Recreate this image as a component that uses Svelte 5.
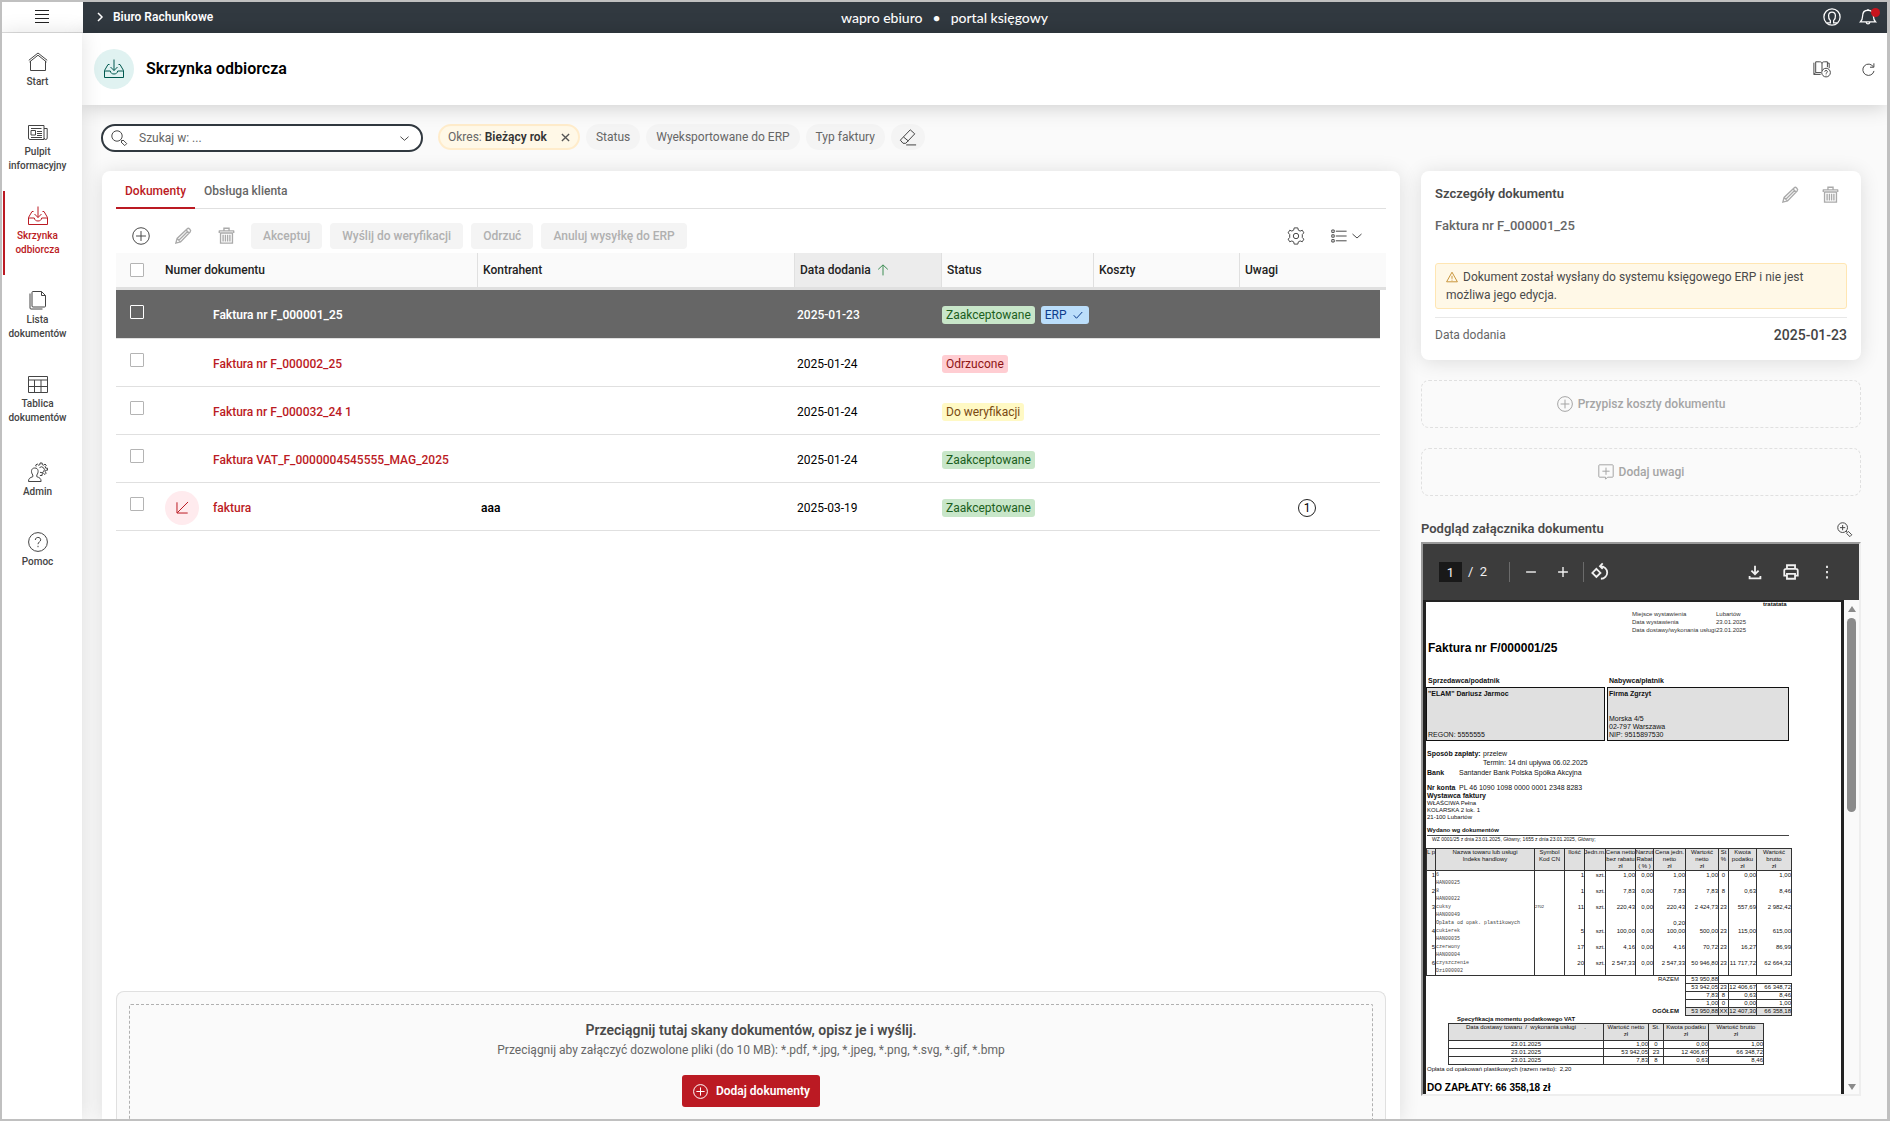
<script>
  const nav = [
    { icon: 'home', lines: ['Start'] },
    { icon: 'news', lines: ['Pulpit', 'informacyjny'] },
    { icon: 'inbox', lines: ['Skrzynka', 'odbiorcza'], active: true },
    { icon: 'files', lines: ['Lista', 'dokumentów'] },
    { icon: 'grid', lines: ['Tablica', 'dokumentów'] },
    { icon: 'admin', lines: ['Admin'], group: true },
    { icon: 'help', lines: ['Pomoc'] }
  ];

  const filters = ['Status', 'Wyeksportowane do ERP', 'Typ faktury'];
  const actions = ['Akceptuj', 'Wyślij do weryfikacji', 'Odrzuć', 'Anuluj wysyłkę do ERP'];

  const documents = [
    { name: 'Faktura nr F_000001_25', who: '', date: '2025-01-23', status: 'Zaakceptowane', tone: 'green', erp: true, selected: true },
    { name: 'Faktura nr F_000002_25', who: '', date: '2025-01-24', status: 'Odrzucone', tone: 'red' },
    { name: 'Faktura nr F_000032_24 1', who: '', date: '2025-01-24', status: 'Do weryfikacji', tone: 'yellow' },
    { name: 'Faktura VAT_F_0000004545555_MAG_2025', who: '', date: '2025-01-24', status: 'Zaakceptowane', tone: 'green' },
    { name: 'faktura', who: 'aaa', date: '2025-03-19', status: 'Zaakceptowane', tone: 'green', incoming: true, notes: 1 }
  ];

  const itemHead = [
    ['L p'], ['Nazwa towaru lub usługi', 'Indeks handlowy'], ['Symbol', 'Kod CN'], ['Ilość'], ['Jedn.m.'],
    ['Cena netto', 'bez rabatu', 'zł'], ['Narzut', 'Rabat', '( % )'], ['Cena jedn.', 'netto', 'zł'],
    ['Wartość', 'netto', 'zł'], ['St', '%'], ['Kwota', 'podatku', 'zł'], ['Wartość', 'brutto', 'zł']
  ];
  const items = [
    ['1', ['6', 'HAN00025'], '', '1', 'szt.', '1,00', '0,00', ['1,00'], '1,00', '0', '0,00', '1,00'],
    ['2', ['8', 'HAN00022'], '', '1', 'szt.', '7,83', '0,00', ['7,83'], '7,83', '8', '0,63', '8,46'],
    ['3', ['cuksy', 'HAN00049', 'Opłata od opak. plastikowych'], '2702', '11', 'szt.', '220,43', '0,00', ['220,43', '', '0,20'], '2 424,73', '23', '557,69', '2 982,42'],
    ['4', ['cukierek', 'HAN00035'], '', '5', 'szt.', '100,00', '0,00', ['100,00'], '500,00', '23', '115,00', '615,00'],
    ['5', ['czerwony', 'HAN00004'], '', '17', 'szt.', '4,16', '0,00', ['4,16'], '70,72', '23', '16,27', '86,99'],
    ['6', ['czyszczenie', 'Dzi000002'], '', '20', 'szt.', '2 547,33', '0,00', ['2 547,33'], '50 946,80', '23', '11 717,72', '62 664,32']
  ];
  const totals = [
    ['53 942,05', '23', '12 406,67', '66 348,72'],
    ['7,83', '8', '0,63', '8,46'],
    ['1,00', '0', '0,00', '1,00']
  ];
  const vat = [
    ['23.01.2025', '1,00', '0', '0,00', '1,00'],
    ['23.01.2025', '53 942,05', '23', '12 406,67', '66 348,72'],
    ['23.01.2025', '7,83', '8', '0,63', '8,46']
  ];
</script>

{#snippet icon(name, size = 20)}
  <svg class="ico" width={size} height={size} viewBox="0 0 20 20" stroke-width={20 / size} aria-hidden="true">
    {#if name === 'menu'}
      <path d="M3 3.500h14M3 7.500h14M3 11.500h14M3 15.500h14" />
    {:else if name === 'home'}
      <path d="M.8 8.300 10 1l9.200 7.300M2.500 9v9.500h15V9M1.500 10 10 3.200l8.500 6.800" />
    {:else if name === 'news'}
      <path d="M.5 3.500h15.500v14H2a1.500 1.500 0 0 1-1.500-1.500zM16 6.500h3.200V16a1.500 1.500 0 0 1-3 0M3 6.500h10.500M3 8.500h4.500v4.500H3zM9 9.500h5M9 11.500h5M9 13.500h5M3 15.500h11" />
    {:else if name === 'inbox'}
      <path d="M10 .5v11M6.500 8l3.500 3.500L13.500 8M5.500 5.500H4L.5 11.500v7h19v-7L16 5.500h-1.500M.5 12h5.800c.3 2 1.700 3 3.700 3s3.400-1 3.700-3h5.800" />
    {:else if name === 'files'}
      <path d="M5 1.500h8.500l4 4v10.500a1 1 0 0 1-1 1H5a1 1 0 0 1-1-1V2.500a1 1 0 0 1 1-1zM13.500 1.500v4h4M2 3.500V18a1 1 0 0 0 1 1h11.500" />
    {:else if name === 'grid'}
      <path d="M.5 2.500h19v16H.5zM.5 6h19M.5 12.500h19M6.500 6v12.500M13 6v12.500" />
    {:else if name === 'admin'}
      <path d="M.5 19.500c0-3.200 1.500-3.800 4.300-4.800V13c-2-2.500-2-7 2-7s4 4.500 2 7v1.700c2.800 1 4.300 1.600 4.300 4.800zM8.200 4.500 7.700 3l1.600-1 1.200 1.200L12 2.600V1h2.200v1.600l1.500.6L17 2l1.300 1.300-1.200 1.300.7 1.600h1.700v2h-1.700l-.7 1.600 1.200 1.300-1.400 1.400-1.300-1.200-1.500.6v1.600h-2.200M11.500 5.600a2.900 2.900 0 1 1 .5 4.700" />
    {:else if name === 'help'}
      <circle cx="10" cy="10" r="9.400" />
      <path d="M7.300 8c0-3.400 5.400-3.400 5.400-.2 0 2-2.700 2.200-2.700 4.400M10 13.800v1.400" />
    {:else if name === 'search'}
      <circle cx="7.500" cy="7.500" r="6.500" />
      <path d="m12.200 12.200 1.300 1.300M12.500 15l2.500-2.500 4.700 4.500-2.500 2.500z" />
    {:else if name === 'zoomin'}
      <circle cx="7.500" cy="7.500" r="6.500" />
      <path d="m12.200 12.200 1.300 1.300M12.500 15l2.500-2.500 4.700 4.500-2.500 2.500zM7.500 4v7M4 7.500h7" />
    {:else if name === 'user'}
      <circle cx="10" cy="10" r="9" />
      <path d="M4.500 16.500h3.700V14C5.500 11.500 5 4.500 10 4.500S14.500 11.500 11.800 14v2.500h3.700" />
    {:else if name === 'bell'}
      <path d="M1.500 15.500h17C16.500 13.500 16 12 16 9c0-4-2-6.500-6-6.500S4 5 4 9c0 3-.5 4.500-2.500 6.500zM10 2.500V1M8 16c.3 2.300 3.700 2.300 4 0" />
    {:else if name === 'book'}
      <path d="M1 3v13h7.500M1 16 3 14V2h4.500C9 2 10 2.700 10 4v8M10 4c0-1.300 1-2 2.500-2H16v6M16 3.500h2V9M3 14h6" />
      <circle cx="14.500" cy="14" r="4.800" />
      <path d="M13 13c0-1.900 3-1.900 3 0 0 1-1.500 1.100-1.500 2.300M14.500 16.300v.7" />
    {:else if name === 'refresh'}
      <path d="M18.500 12.200A8.700 8.700 0 1 1 17.500 6M18.300 .5V6.500h-6" />
    {:else if name === 'eraser'}
      <path d="M4.500 17 1.500 13.500 12.500 2l5 4.500-10 10.500zM5 10 10.500 14.500M8 18.800h11" />
    {:else if name === 'plus'}
      <circle cx="10" cy="10" r="9.200" />
      <path d="M10 4.500v11M4.500 10h11" />
    {:else if name === 'pencil'}
      <path d="m1 19 1.500-5.500L14.500 2c1.600-1.500 5 1.800 3.500 3.500L6.500 17.500zM13 3.500 16.500 7M2.500 13.500l4 4M4.500 15.500l10-10" />
    {:else if name === 'trash'}
      <path d="M1 4.500h18M2.500 7h15M1.500 4.500V7M18.500 4.500V7M7 4V1.500h6V4M3 7v12h14V7M6 9v8M8.700 9v8M11.300 9v8M14 9v8" />
    {:else if name === 'gear'}
      <circle cx="10" cy="10" r="3" />
      <path d="m8 1-.6 2.500-2 1L3 3.600 1.300 6.500 3 8.300v3.400l-1.700 1.800L3 16.400l2.400-.9 2 1L8 19h4l.6-2.500 2-1 2.400.9 1.700-2.900-1.700-1.800V8.300l1.700-1.800L17 3.600l-2.400.9-2-1L12 1z" />
    {:else if name === 'list'}
      <path d="M1 2.500h3v3H1zM1 8.500h3v3H1zM1 14.500h3v3H1zM6 4h13.500M6 10h13.500M6 16h13.500" />
    {:else if name === 'chevron'}
      <path d="m1 6 9 8 9-8" />
    {:else if name === 'right'}
      <path d="m6 2 8 8-8 8" />
    {:else if name === 'close'}
      <path d="m2 2 16 16M18 2 2 18" />
    {:else if name === 'up'}
      <path d="M10 19V1.500M2 9 10 1.500 18 9" />
    {:else if name === 'check'}
      <path d="m1.500 10.500 5.500 6L18.500 4" />
    {:else if name === 'incoming'}
      <path d="M18.500 1.500 2 18M1.500 2v16.500H18" />
    {:else if name === 'warn'}
      <path d="m10 2 9 16H1zM10 8v5M10 14.500v1.500" />
    {:else if name === 'note'}
      <path d="M2 1h16a1 1 0 0 1 1 1v13.500a1 1 0 0 1-1 1h-6L9.500 19v-2.500H2a1 1 0 0 1-1-1V2a1 1 0 0 1 1-1zM10 4.500v9M5.500 9h9" />
    {:else if name === 'minus'}
      <path d="M3 10h14" />
    {:else if name === 'add'}
      <path d="M3 10h14M10 3v14" />
    {:else if name === 'rotate'}
      <path d="M6 6.500 10.500 11 6 15.500 1.500 11zM10 3.500c5 0 8 3.300 8 7s-3 7-7 7M13 .5l-3 3 3 3" />
    {:else if name === 'download'}
      <path d="M10 3v9.500M6 8.500l4 4 4-4M4 14.500V17h12v-2.500" />
    {:else if name === 'print'}
      <path d="M5.500 6.500V2.500h9v4M5 14H2.500V8.500a2 2 0 0 1 2-2h11a2 2 0 0 1 2 2V14H15M5.500 12h9v5.500h-9z" />
    {:else if name === 'dots'}
      <path d="M10 3v2.500M10 8.800v2.500M10 14.600v2.500" />
    {/if}
  </svg>
{/snippet}

<div class="shell">
  <header class="topbar">
    <div class="topleft">
      <button class="plain burger" aria-label="Menu">{@render icon('menu')}</button>
      <button class="plain org">{@render icon('right', 10)}<span>Biuro Rachunkowe</span></button>
    </div>
    <div class="brand">wapro ebiuro<span class="sep">•</span>portal księgowy</div>
    <div class="topright">
      <button class="plain" aria-label="Konto">{@render icon('user', 18)}</button>
      <button class="plain bell" aria-label="Powiadomienia">{@render icon('bell', 18)}<span class="dot"></span></button>
    </div>
  </header>

  <div class="body">
    <nav class="side">
      {#each nav as item}
        <a href="#{item.icon}" class:active={item.active} class:group={item.group}>
          {@render icon(item.icon, 20)}
          <span class="caption">{#each item.lines as line}<span>{line}</span>{/each}</span>
        </a>
      {/each}
    </nav>

    <main>
      <div class="pagehead">
        <span class="round">{@render icon('inbox', 20)}</span>
        <h1>Skrzynka odbiorcza</h1>
        <button class="plain tint" aria-label="Instrukcja">{@render icon('book', 18)}</button>
        <button class="plain" aria-label="Odśwież">{@render icon('refresh', 13)}</button>
      </div>

      <div class="filters">
        <label class="search">
          {@render icon('search', 16)}
          <input type="text" placeholder="Szukaj w: ..." aria-label="Szukaj" />
          {@render icon('chevron', 9)}
        </label>
        <button class="pill on">Okres:&nbsp;<b>Bieżący rok</b>{@render icon('close', 9)}</button>
        {#each filters as filter}
          <button class="pill">{filter}</button>
        {/each}
        <button class="pill eraser" aria-label="Wyczyść filtry">{@render icon('eraser', 18)}</button>
      </div>

      <div class="columns">
        <section class="card docs">
          <div class="tabs">
            <button class="tab current">Dokumenty</button>
            <button class="tab">Obsługa klienta</button>
          </div>

          <div class="toolbar">
            <button class="plain tool" aria-label="Dodaj">{@render icon('plus', 18)}</button>
            <button class="plain tool off" aria-label="Edytuj" disabled>{@render icon('pencil', 17)}</button>
            <button class="plain tool off" aria-label="Usuń" disabled>{@render icon('trash', 17)}</button>
            <div class="actions">
              {#each actions as action}
                <button class="action" disabled>{action}</button>
              {/each}
            </div>
            <button class="plain gear" aria-label="Ustawienia">{@render icon('gear', 18)}</button>
            <button class="plain view" aria-label="Widok">{@render icon('list', 16)}{@render icon('chevron', 10)}</button>
          </div>

          <table class="list">
            <colgroup>
              <col class="c-check" /><col /><col /><col class="c-date" /><col class="c-status" /><col class="c-cost" /><col class="c-notes" /><col class="c-gutter" />
            </colgroup>
            <thead>
              <tr>
                <th class="check"><input type="checkbox" aria-label="Zaznacz wszystkie" /></th>
                <th class="first">Numer dokumentu</th>
                <th>Kontrahent</th>
                <th class="sorted"><span class="sort">Data dodania {@render icon('up', 12)}</span></th>
                <th>Status</th>
                <th>Koszty</th>
                <th>Uwagi</th>
                <th class="gutter"></th>
              </tr>
            </thead>
            <tbody>
              {#each documents as doc}
                <tr class:selected={doc.selected}>
                  <td class="check"><input type="checkbox" aria-label={doc.name} /></td>
                  <td class="first">
                    <div class="name">
                      <span class="slot" class:incoming={doc.incoming}>{#if doc.incoming}{@render icon('incoming', 13)}{/if}</span>
                      <a href="#dokument">{doc.name}</a>
                    </div>
                  </td>
                  <td class="who">{doc.who}</td>
                  <td class="date">{doc.date}</td>
                  <td class="status">
                    <div class="badges">
                      <span class="badge {doc.tone}">{doc.status}</span>
                      {#if doc.erp}<span class="badge blue">ERP {@render icon('check', 10)}</span>{/if}
                    </div>
                  </td>
                  <td></td>
                  <td class="notes">{#if doc.notes}<span class="count">{doc.notes}</span>{/if}</td>
                  <td class="gutter"></td>
                </tr>
              {/each}
            </tbody>
          </table>

          <div class="drop">
            <div class="dropinner">
              <h2>Przeciągnij tutaj skany dokumentów, opisz je i wyślij.</h2>
              <p>Przeciągnij aby załączyć dozwolone pliki (do 10 MB): *.pdf, *.jpg, *.jpeg, *.png, *.svg, *.gif, *.bmp</p>
              <button class="primary">{@render icon('plus', 15)}Dodaj dokumenty</button>
            </div>
          </div>
        </section>

        <aside>
          <section class="card details">
            <div class="dhead">
              <h3>Szczegóły dokumentu</h3>
              <button class="plain off" aria-label="Edytuj dokument" disabled>{@render icon('pencil', 17)}</button>
              <button class="plain off" aria-label="Usuń dokument" disabled>{@render icon('trash', 17)}</button>
            </div>
            <div class="docname">Faktura nr F_000001_25</div>
            <p class="alert"><span class="warn">{@render icon('warn', 12)}</span>Dokument został wysłany do systemu księgowego ERP i nie jest możliwa jego edycja.</p>
            <div class="kv"><span>Data dodania</span><strong>2025-01-23</strong></div>
          </section>

          <button class="dashed" disabled>{@render icon('plus', 16)}Przypisz koszty dokumentu</button>
          <button class="dashed" disabled>{@render icon('note', 16)}Dodaj uwagi</button>

          <div class="prevhead">
            <h3>Podgląd załącznika dokumentu</h3>
            <button class="plain" aria-label="Powiększ">{@render icon('zoomin', 15)}</button>
          </div>

          <div class="viewer">
            <div class="vbar">
              <input class="pageno" type="text" value="1" aria-label="Strona" />
              <span class="of">/&nbsp; 2</span>
              <span class="vsep"></span>
              <button class="plain" aria-label="Pomniejsz">{@render icon('minus', 14)}</button>
              <button class="plain" aria-label="Powiększ">{@render icon('add', 14)}</button>
              <span class="vsep"></span>
              <button class="plain" aria-label="Obróć">{@render icon('rotate', 18)}</button>
              <div class="vright">
                <button class="plain" aria-label="Pobierz">{@render icon('download', 18)}</button>
                <button class="plain" aria-label="Drukuj">{@render icon('print', 18)}</button>
                <button class="plain" aria-label="Więcej">{@render icon('dots', 18)}</button>
              </div>
            </div>
            <div class="vdoc">
              <div class="paper">
                <div class="clip">tratatata</div>
                <dl class="meta">
                  <dt>Miejsce wystawienia</dt><dd>Lubartów</dd>
                  <dt>Data wystawienia</dt><dd>23.01.2025</dd>
                  <dt>Data dostawy/wykonania usługi</dt><dd>23.01.2025</dd>
                </dl>
                <div class="invno">Faktura nr F/000001/25</div>
                <div class="parties">
                  <b>Sprzedawca/podatnik</b><b>Nabywca/płatnik</b>
                  <div class="party"><b>"ELAM" Dariusz Jarmoc</b><span>REGON: 5555555</span></div>
                  <div class="party"><b>Firma Zgrzyt</b><span>Morska 4/5<br />02-797 Warszawa<br />NIP: 9515897530</span></div>
                </div>
                <div class="pay"><b>Sposób zapłaty:</b><span>przelew<br />Termin: 14 dni upływa 06.02.2025</span></div>
                <div class="bank"><b>Bank</b><span>Santander Bank Polska Spółka Akcyjna</span></div>
                <div class="acct"><b>Nr konta</b><span>PL 46 1090 1098 0000 0001 2348 8283</span></div>
                <div class="issuer"><b>Wystawca faktury</b><span>WŁAŚCIWA Pełna</span><span>KOLARSKA 2 lok. 1</span><span>21-100 Lubartów</span></div>
                <div class="issued"><b>Wydano wg dokumentów</b></div>
                <div class="wz">WZ 0001/25 z dnia 23.01.2025, Główny; 1655 z dnia 23.01.2025, Główny;</div>

                <table class="inv items">
                  <colgroup>
                    <col class="w9" /><col /><col class="w30" /><col class="w20" /><col class="w21" /><col class="w30" /><col class="w18" /><col class="w32" /><col class="w33" /><col class="w10" /><col class="w28" /><col class="w35" />
                  </colgroup>
                  <thead>
                    <tr>{#each itemHead as cell}<th>{#each cell as line}<span>{line}</span>{/each}</th>{/each}</tr>
                  </thead>
                  <tbody>
                    {#each items as row}
                      <tr>
                        <td>{row[0]}</td>
                        <td class="mono">{#each row[1] as line}<span>{line}</span>{/each}</td>
                        <td class="code">{row[2]}</td>
                        <td>{row[3]}</td><td>{row[4]}</td><td>{row[5]}</td><td>{row[6]}</td>
                        <td>{#each row[7] as line}<span>{line || '\u00a0'}</span>{/each}</td>
                        <td>{row[8]}</td><td class="mid">{row[9]}</td><td>{row[10]}</td><td>{row[11]}</td>
                      </tr>
                    {/each}
                  </tbody>
                  <tfoot>
                    <tr><td class="sum" colspan="8">RAZEM</td><td>53 950,88</td><td class="sum" colspan="3"></td></tr>
                    {#each totals as row}
                      <tr><td class="sum" colspan="8"></td><td>{row[0]}</td><td class="mid">{row[1]}</td><td>{row[2]}</td><td>{row[3]}</td></tr>
                    {/each}
                    <tr class="grand"><td class="sum" colspan="8"><b>OGÓŁEM</b></td><td>53 950,88</td><td class="mid">XX</td><td>12 407,30</td><td>66 358,18</td></tr>
                  </tfoot>
                </table>

                <div class="spectitle"><b>Specyfikacja momentu podatkowego VAT</b></div>
                <table class="inv spec">
                  <colgroup><col /><col class="w45" /><col class="w15" /><col class="w45" /><col class="w55" /></colgroup>
                  <thead>
                    <tr><th>Data dostawy towaru &nbsp;/&nbsp; wykonania usługi &nbsp; &nbsp; .</th><th>Wartość netto<br />zł</th><th>St.</th><th>Kwota podatku<br />zł</th><th>Wartość brutto<br />zł</th></tr>
                  </thead>
                  <tbody>
                    {#each vat as row}
                      <tr><td class="mid">{row[0]}</td><td>{row[1]}</td><td class="mid">{row[2]}</td><td>{row[3]}</td><td>{row[4]}</td></tr>
                    {/each}
                  </tbody>
                </table>
                <div class="fee"><span>Opłata od opakowań plastikowych (razem netto):</span><span>2,20</span></div>
                <div class="due">DO ZAPŁATY: 66 358,18 zł</div>
              </div>
              <div class="scroll"><span class="arrow"></span><span class="thumb"></span><span class="arrow down"></span></div>
            </div>
          </div>
        </aside>
      </div>
    </main>
  </div>
</div>

<style>
  :global(body) { margin: 0; }
  * { box-sizing: border-box; }
  h1, h2, h3, p, dl, dd { margin: 0; }
  button, input { font: inherit; color: inherit; }
  button { cursor: pointer; white-space: nowrap; }
  a { color: inherit; text-decoration: none; }
  .ico { display: block; flex: none; fill: none; stroke: currentColor; overflow: visible; }
  .plain { display: flex; align-items: center; padding: 0; border: 0; background: none; }
  .off { color: #aaa; }
  .off .ico { stroke-width: 1.600; }

  .shell {
    display: flex; flex-direction: column; height: 100vh; overflow: hidden;
    border: solid #c0c0c0; border-width: 2px 3px 2px 2px; background: #fafafa;
    font: 12px/16px Roboto, "Liberation Sans", sans-serif; color: #4a4a4a;
  }

  .topbar { display: grid; grid-template-columns: 1fr auto 1fr; height: 31px; flex: none; background: #313940; color: #fff; }
  .topleft, .topright { display: flex; align-items: center; }
  .topleft { align-items: stretch; }
  .burger { width: 81px; justify-content: center; background: #fff; color: #222; border-bottom: 1px solid #ddd; padding-right: 2px; }
  .org { gap: 8px; padding: 0 0 2px 12px; font-weight: 600; }
  .org .ico { stroke-width: 3; }
  .brand { display: flex; align-items: center; gap: 8px; font: 500 14px/31px Lato, sans-serif; }
  .brand .sep { padding: 0 2px; }
  .topright { justify-content: flex-end; gap: 18px; padding: 0 10px 2px 0; }
  .topright .ico { stroke-width: 1.400; }
  .bell { position: relative; }
  .dot { position: absolute; top: 0; right: -3px; width: 9px; height: 9px; border-radius: 50%; background: #c8141e; }

  .body { display: flex; flex: 1; min-height: 0; }
  .side { position: relative; z-index: 2; flex: none; width: 80px; padding: 4px 12px 0 1px; background: #fff; box-shadow: 0 0 20px rgba(0, 0, 0, .12); }
  .side a { display: flex; flex-direction: column; align-items: center; gap: 3px; padding: 15px 0 18px; border-left: 2px solid transparent; font: 500 10px/14px Roboto, sans-serif; color: #444; }
  .side a.active { color: #bb1a23; border-left-color: #bb1a23; }
  .side a.group { margin-top: 4px; }
  .caption { display: flex; flex-direction: column; align-items: center; }

  main { display: flex; flex-direction: column; flex: 1; min-width: 0; }
  .pagehead { position: relative; z-index: 1; display: flex; align-items: center; height: 72px; flex: none; padding: 0 12px 0 12px; gap: 31px; background: #fff; box-shadow: 0 1px 20px rgba(0, 0, 0, .2); }
  .round { display: flex; align-items: center; justify-content: center; width: 40px; height: 40px; border-radius: 50%; background: #e0f2f1; color: #00594f; margin-right: -19px; }
  h1 { flex: 1; font-size: 16px; line-height: 20px; font-weight: 600; color: #000; }

  .filters { display: flex; align-items: flex-start; gap: 6px; padding: 19px 20px 0 19px; height: 66px; flex: none; }
  .search { display: flex; align-items: center; width: 322px; height: 28px; padding: 0 12px 0 8px; margin-right: 9px; border: 2px solid #313940; border-radius: 14px; background: #fff; }
  .search input { flex: 1; min-width: 0; padding: 0 0 0 12px; border: 0; outline: 0; background: none; }
  .search input::placeholder { color: #666; opacity: 1; }
  .pill { display: flex; align-items: center; height: 26px; padding: 0 10px; border: 0; border-radius: 13px; background: #f4f4f4; color: #666; }
  .pill.on { padding: 0 8px; border: 2px solid #ffeccb; background: #fff8e7; }
  .pill b { font-weight: 600; color: #333; padding-right: 14px; }
  .pill.on .ico { stroke-width: 3; color: #555; }
  .pill.eraser { padding: 0 8px; color: #444; }

  .columns { display: flex; gap: 21px; flex: 1; min-height: 0; padding: 0 26px 0 20px; }
  .card { background: #fff; border-radius: 8px; box-shadow: 0 2px 20px rgba(0, 0, 0, .12); }
  .docs { display: flex; flex-direction: column; flex: 1; min-width: 0; padding: 0 14px; border-radius: 8px 8px 0 0; }
  .tabs { display: flex; height: 38px; flex: none; box-shadow: inset 0 -1px #e0e0e0; }
  .tab { padding: 4px 9px 0; border: 0; border-bottom: 2px solid transparent; background: none; font-weight: 500; color: #666; }
  .tab.current { color: #bb1a23; border-bottom-color: #bb1a23; }
  .toolbar { display: flex; align-items: center; height: 44px; flex: none; padding: 9px 24px 0 16px; gap: 26px; }
  .toolbar .tool:first-child { margin-right: -1px; }
  .actions { display: flex; flex: 1; gap: 8px; margin-left: -10px; }
  .action { height: 26px; padding: 0 12px; border: 0; border-radius: 4px; background: #f4f4f4; font-weight: 500; color: #b0b0b0; }
  .view { gap: 5px; }

  .list { width: 100%; table-layout: fixed; border-collapse: separate; border-spacing: 0; }
  .c-check { width: 44px; }
  .c-date { width: 147px; }
  .c-status { width: 152px; }
  .c-cost { width: 146px; }
  .c-notes { width: 141px; }
  .c-gutter { width: 6px; }
  th, td { padding: 0; text-align: left; }
  .list th { height: 37px; padding: 0 5px; background: #fafafa; border-bottom: 3px solid #e0e0e0; border-left: 1px solid #e0e0e0; font-weight: 500; color: #222; }
  .list th.check, .list th.first, .list th.gutter { border-left: 0; }
  .list th.sorted { background: #ececec; }
  .sort { display: flex; align-items: center; gap: 6px; color: #222; }
  .sort .ico { color: #3e8e55; }
  .list td { height: 48px; padding-top: 2px; border-bottom: 1px solid #e0e0e0; color: #000; }
  .list td.gutter { border-bottom: 0; }
  .list tr.selected td { height: 49px; }
  .list tr.selected td:not(.gutter) { background: #666; color: #fff; }
  .list .check { padding: 0 0 0 14px; }
  .list td.check { padding-bottom: 5px; }
  input[type='checkbox'] { display: block; appearance: none; width: 14px; height: 14px; margin: 0; border: 1px solid #b4b4b4; border-radius: 1px; background: #fff; }
  .selected input[type='checkbox'] { border-color: #fff; background: transparent; }
  .list .first { padding-left: 5px; }
  .name { display: flex; align-items: center; gap: 14px; font-weight: 500; color: #bb1a23; }
  .selected .name { color: #fff; font-weight: 600; }
  .slot { display: flex; align-items: center; justify-content: center; width: 34px; height: 34px; border-radius: 50%; }
  .slot.incoming { background: #ffebee; }
  .list .who { padding-left: 4px; font-weight: 600; }
  .list .date { padding-left: 3px; }
  .list .selected .date { font-weight: 500; }
  .list .status { padding-left: 1px; }
  .badges { display: flex; gap: 6px; }
  .badge { display: flex; align-items: center; gap: 6px; height: 18px; padding: 0 4px; border-radius: 3px; }
  .green { background: #c8e6c9; color: #1b5e20; }
  .red { background: #ffcdd2; color: #8e1414; }
  .yellow { background: #fff9c4; color: #7a4a12; }
  .blue { background: #bbdefb; color: #0d3c8c; padding-right: 6px; }
  .count { display: flex; align-items: center; justify-content: center; width: 18px; height: 18px; margin: 0 0 0 59px; border: 1px solid #222; border-radius: 50%; }

  .drop { margin-top: auto; padding: 12px 12px 0; border: 1px solid #e0e0e0; border-bottom: 0; border-radius: 8px 8px 0 0; background: #fafafa; }
  .dropinner { display: flex; flex-direction: column; align-items: center; padding: 15px 0 12px; border: 1px dashed #b0b0b0; border-bottom: 0; border-radius: 2px 2px 0 0; }
  h2 { font-size: 14px; line-height: 20px; font-weight: 600; }
  .dropinner p { margin-top: 1px; line-height: 18px; color: #666; }
  .primary { display: flex; align-items: center; gap: 8px; height: 32px; margin-top: 16px; padding: 0 10px 0 11px; border: 0; border-radius: 3px; background: #bb1a23; color: #fff; font-weight: 600; }

  aside { display: flex; flex-direction: column; flex: none; width: 440px; }
  .details { padding: 14px 14px 16px; }
  h3 { flex: 1; font-size: 13px; line-height: 18px; font-weight: 600; }
  .dhead { display: flex; align-items: center; gap: 23px; padding-right: 8px; }
  .docname { margin-top: 14px; font-size: 13px; line-height: 18px; font-weight: 500; color: #666; }
  .alert { margin-top: 28px; padding: 4px 10px; border: 1px solid #ffe6b3; border-radius: 3px; background: #fff8e7; line-height: 18px; }
  .warn { display: inline-block; vertical-align: -2px; padding-right: 5px; color: #c9963c; }
  .kv { display: flex; align-items: center; justify-content: space-between; margin-top: 8px; padding-top: 8px; border-top: 1px solid #e8e8e8; line-height: 18px; color: #666; }
  .kv strong { font-size: 14px; font-weight: 500; color: #444; }
  .dashed { display: flex; align-items: center; justify-content: center; gap: 5px; height: 48px; flex: none; margin-top: 20px; border: 1px dashed #e0e0e0; border-radius: 8px; background: none; font-weight: 500; color: #a5a5a5; }
  .prevhead { display: flex; align-items: center; padding: 24px 9px 4px 0; }

  .viewer { display: flex; flex-direction: column; flex: 1; min-height: 0; margin-bottom: 23px; border: 2px solid; border-color: #9a9a9a #eee #eee #9a9a9a; }
  .vbar { display: flex; align-items: center; flex: none; height: 56px; padding: 0 23px 0 16px; background: #3c3c3c; color: #f1f1f1; font-size: 13px; }
  .vbar .ico { stroke-width: 2; }
  .pageno { width: 23px; height: 20px; padding: 0; border: 0; background: #191919; text-align: center; }
  .of { padding: 0 22px 0 6px; }
  .vsep { width: 1px; height: 20px; background: #6b6b6b; }
  .vsep + .plain { margin-left: 14px; }
  .vsep + .plain + .plain { margin: 0 13px 0 18px; }
  .vsep + .plain:has(+ .vright) { margin-left: 7px; }
  .vright { display: flex; gap: 18px; margin-left: auto; }
  .vright .plain { width: 18px; }
  .vdoc { display: flex; flex: 1; min-height: 0; overflow: hidden; background: #222; }
  .paper { flex: 1; min-width: 0; margin: 2px 3px 0; padding-left: 1px; overflow: hidden; background: #fff; color: #111; font: 6px/8px "Liberation Sans", sans-serif; }
  .clip { padding-left: 336px; font-weight: 700; line-height: 4px; }
  .meta { display: grid; grid-template-columns: 84px auto; padding: 4px 0 0 205px; white-space: nowrap; color: #333; }
  .meta dt, .meta dd { line-height: 8px; }
  .invno { padding: 6px 0 20px 1px; font-size: 12px; line-height: 16px; font-weight: 700; color: #000; }
  .parties { display: grid; grid-template-columns: 179px 182px; gap: 2px; margin-left: -1px; font-size: 7px; line-height: 8px; }
  .parties > b { padding-left: 2px; line-height: 9px; }
  .party { display: flex; flex-direction: column; justify-content: space-between; height: 54px; padding: 2px 1px 1px; border: 1px solid #111; background: #e0e0e0; }
  .pay, .bank, .acct { display: flex; font-size: 7px; }
  .pay { padding-top: 8px; line-height: 9px; }
  .pay b { width: 56px; }
  .bank { padding-top: 2px; }
  .bank b, .acct b { width: 32px; }
  .acct { padding-top: 7px; }
  .issuer { display: flex; flex-direction: column; line-height: 7px; }
  .issuer b { font-size: 7px; line-height: 8px; }
  .issued { margin-top: 4px; margin-right: 52px; border-bottom: 1px solid #444; line-height: 10px; }
  .wz { padding-left: 5px; font-size: 5px; line-height: 6px; }
  .inv { table-layout: fixed; border-collapse: collapse; }
  .inv th, .inv td { border: 1px solid #333; white-space: nowrap; vertical-align: top; line-height: 8px; height: 8px; }
  .inv th { background: #e0e0e0; font-weight: 400; text-align: center; line-height: 7px; }
  .inv td { text-align: right; }
  .inv span { display: block; }
  .items { width: 366px; margin: 6px 0 0 -1px; }
  .items th { height: 22px; }
  .items th span { display: flex; justify-content: center; }
  .items tbody td { border-top: 0; border-bottom: 0; }
  .items td.mono { text-align: left; font-family: "Liberation Mono", monospace; font-size: 5px; color: #444; }
  .items td.code { text-align: left; font-size: 4px; }
  .inv td.mid { text-align: center; }
  .items tfoot td, .spec td { line-height: 7px; height: 7px; }
  .items .sum { border: 0; padding-right: 6px; }
  .items tbody tr:last-child td { border-bottom: 1px solid #333; }
  .grand td:not(.sum) { background: #e0e0e0; }
  .w9 { width: 9px; }
  .w10 { width: 10px; }
  .w15 { width: 15px; }
  .w18 { width: 18px; }
  .w20 { width: 20px; }
  .w21 { width: 21px; }
  .w28 { width: 28px; }
  .w30 { width: 30px; }
  .w32 { width: 32px; }
  .w33 { width: 33px; }
  .w35 { width: 35px; }
  .w45 { width: 45px; }
  .w55 { width: 55px; }
  .spectitle { padding-left: 30px; line-height: 7px; }
  .spec { width: 316px; margin-left: 21px; }
  .spec th { height: 17px; }
  .fee { display: flex; gap: 3px; }
  .due { padding-top: 8px; font-size: 10px; line-height: 14px; font-weight: 700; color: #000; }
  .scroll { display: flex; flex-direction: column; align-items: center; flex: none; width: 15px; padding: 6px 0 4px; background: #fafafa; }
  .arrow { border: 4px solid transparent; border-top: 0; border-bottom: 6px solid #8b8b8b; }
  .arrow.down { margin-top: auto; border-bottom: 0; border-top: 6px solid #8b8b8b; }
  .thumb { width: 9px; flex: 0 0 40%; margin-top: 6px; border-radius: 5px; background: #8b8b8b; }
</style>
